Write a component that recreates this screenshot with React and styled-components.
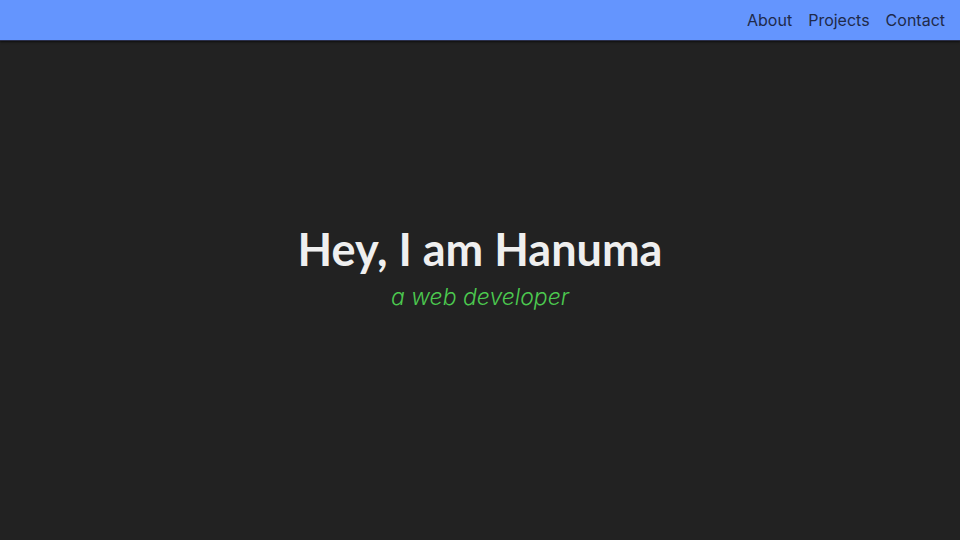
import React from 'react';
import styled, { createGlobalStyle } from 'styled-components';

const GlobalStyle = createGlobalStyle`
  html, body {
    margin: 0;
    padding: 0;
    background: #222222;
  }
  * {
    box-sizing: border-box;
  }
`;

const Page = styled.div`
  display: flex;
  flex-direction: column;
  height: 540px;
  background: #222222;
`;

const NavBar = styled.nav`
  height: 41px;
  background: #6495fe;
  border-bottom: 1px solid #2a2f4a;
  box-shadow: 0 1px 2px rgba(0, 0, 0, 0.6);
  display: flex;
  justify-content: flex-end;
  align-items: center;
  padding: 0 15px 0 0;
  gap: 16px;
`;

const NavLink = styled.a`
  font-family: "Inter", "DejaVu Sans", sans-serif;
  font-size: 16px;
  color: #1f2a4a;
  text-decoration: none;
  cursor: pointer;
`;

const Hero = styled.main`
  flex: 1;
  display: flex;
  flex-direction: column;
  align-items: center;
  padding-top: 181px;
`;

const Title = styled.h1`
  margin: 0;
  font-family: "Lato", "Open Sans", sans-serif;
  font-weight: 700;
  font-size: 45px;
  color: #efefef;
  line-height: 54px;
`;

const Subtitle = styled.p`
  margin: 6px 0 0;
  font-family: "Inter", "DejaVu Sans", sans-serif;
  font-style: italic;
  font-weight: 300;
  font-size: 23px;
  color: #4cc94f;
  line-height: 30px;
`;

export default function App() {
  return (
    <Page>
      <GlobalStyle />
      <NavBar>
        <NavLink>About</NavLink>
        <NavLink>Projects</NavLink>
        <NavLink>Contact</NavLink>
      </NavBar>
      <Hero>
        <Title>Hey, I am Hanuma</Title>
        <Subtitle>a web developer</Subtitle>
      </Hero>
    </Page>
  );
}
